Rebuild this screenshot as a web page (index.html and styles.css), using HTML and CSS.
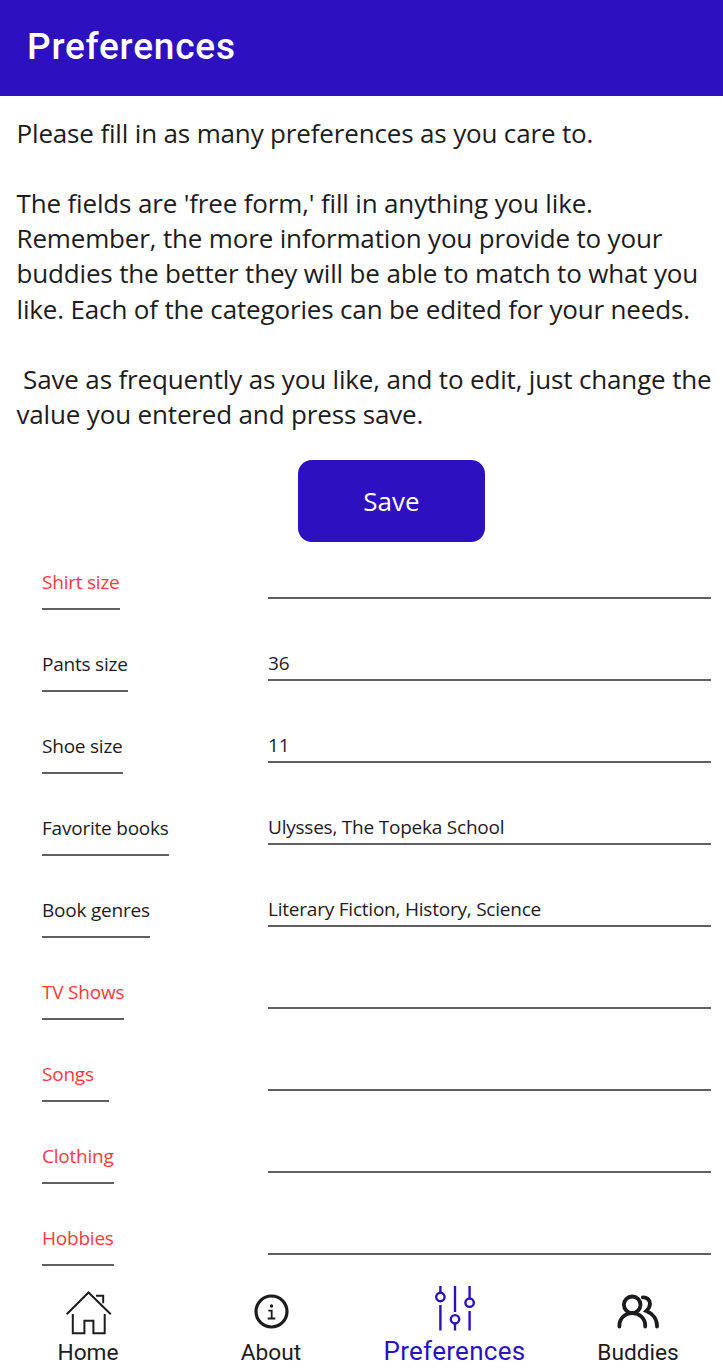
FILE: index.html
```html
<!DOCTYPE html>
<html lang="en">
<head>
<meta charset="utf-8">
<title>Preferences</title>
<link rel="stylesheet" href="styles.css">
</head>
<body>
<div class="app">
  <header class="bar"><h1 class="title">Preferences</h1></header>
  <main class="content">
    <div class="intro">
      <p>Please fill in as many preferences as you care to.</p>
      <p>The fields are 'free form,' fill in anything you like.<br>Remember, the more information you provide to your<br>buddies the better they will be able to match to what you<br>like. Each of the categories can be edited for your needs.</p>
      <p>&nbsp;Save as frequently as you like, and to edit, just change the<br>value you entered and press save.</p>
    </div>
    <button class="save">Save</button>
    <div class="fields">
      <div class="row"><span class="label empty">Shirt size</span><span class="value"></span></div>
      <div class="row"><span class="label">Pants size</span><span class="value">36</span></div>
      <div class="row"><span class="label">Shoe size</span><span class="value">11</span></div>
      <div class="row"><span class="label">Favorite books</span><span class="value">Ulysses, The Topeka School</span></div>
      <div class="row"><span class="label">Book genres</span><span class="value">Literary Fiction, History, Science</span></div>
      <div class="row"><span class="label empty">TV Shows</span><span class="value"></span></div>
      <div class="row"><span class="label empty">Songs</span><span class="value"></span></div>
      <div class="row"><span class="label empty">Clothing</span><span class="value"></span></div>
      <div class="row"><span class="label empty">Hobbies</span><span class="value"></span></div>
    </div>
  </main>
  <nav class="tabs">
    <a class="tab home">
      <svg class="icon" viewBox="0 0 48 48"><path d="M2.7 24.2 24.500 2.500 46.800 24.200M32 5.800h7.200v7.500M8.800 24v19.200h11.600V30.800h9v12.400h11.300V24"/></svg>
      <span>Home</span>
    </a>
    <a class="tab about">
      <svg class="icon" viewBox="0 0 48 48"><circle cx="24.500" cy="21.500" r="15.500" stroke-width="3.200"/><circle class="solid" cx="24.500" cy="16" r="1.700"/><path d="M21.300 20.700h3.400v7.600M20.700 28.500h7.600" stroke-width="1.800"/></svg>
      <span>About</span>
    </a>
    <a class="tab active">
      <svg class="icon" viewBox="0 0 48 48"><path d="M9.400 0v7.500M9.400 19v25.500M24 0v26M24 37v7.500M38.600 0v13M38.600 25v19.500"/><circle cx="9.400" cy="11" r="4.200"/><circle cx="24" cy="33.300" r="4.200"/><circle cx="38.600" cy="16.700" r="4.200"/></svg>
      <span>Preferences</span>
    </a>
    <a class="tab buddies">
      <svg class="icon" viewBox="0 0 48 48"><g stroke-width="3.800" stroke-linecap="round"><circle cx="18.200" cy="14.800" r="8.300"/><path d="M5.400 36.500v-1c0-7 5.800-12.400 12.900-12.400s12.900 5.400 12.900 12.400v1M28.800 7.300c4-.2 7.200 2.700 7.200 6.300 0 3-1.600 5.500-3.600 7.400 6.300 2.600 10.600 8 10.600 14.500v1"/></g></svg>
      <span>Buddies</span>
    </a>
  </nav>
</div>
</body>
</html>
```
FILE: styles.css
```css
* { box-sizing: border-box; }
body { margin: 0; background: #fff; color: #1c1c1e; font-family: "Open Sans", sans-serif; }
.app { width: 723px; height: 1369px; display: flex; flex-direction: column; overflow: hidden; }
.bar { height: 96px; background: #2d10bf; padding: 25px 27px 0; flex: none; }
.title { margin: 0; color: #fff; font: 500 37px/44px Roboto, sans-serif; letter-spacing: .8px; }
.content { flex: none; height: 1184px; }
.intro { padding: 19.600px 0 0 16.500px; height: 364px; font-size: 26px; line-height: 35.2px; letter-spacing: -.16px; white-space: nowrap; }
.intro p { margin: 0 0 35.2px; }
.save { display: block; width: 187px; height: 82px; margin: 0 0 0 298px; padding: 0; border: 0; border-radius: 14px; background: #2d10bf; color: #fff; font: 26px "Open Sans", sans-serif; }
.fields { padding: 0 12px 0 42px; font-size: 19px; line-height: 26px; letter-spacing: -.22px; white-space: nowrap; }
.row { height: 82px; display: grid; grid-template-columns: 226px 1fr; align-items: start; }
.label { justify-self: start; min-width: 67px; margin-top: 27px; height: 41px; border-bottom: 2px solid #606060; }
.value { margin-top: 26px; height: 31px; border-bottom: 2px solid #606060; }
.empty { color: #fb3a3f; }
.tabs { height: 89px; display: grid; grid-template-columns: 176px 190px 177px 180px; padding-top: 10px; font: 22.700px/28px Roboto, sans-serif; }
.tab { display: flex; flex-direction: column; align-items: center; }
.tab span { margin-top: 1px; }
.icon { width: 48px; height: 48px; fill: none; stroke: #1c1c1e; stroke-width: 2; }
.solid { fill: #1c1c1e; stroke: none; }
.active { color: #2d10bf; font-size: 26px; margin-top: -4px; }
.active .icon { stroke: #2d10bf; stroke-width: 2.400; }
.active span { margin-top: 3px; letter-spacing: .3px; }
.buddies { padding-left: 10px; }
```
